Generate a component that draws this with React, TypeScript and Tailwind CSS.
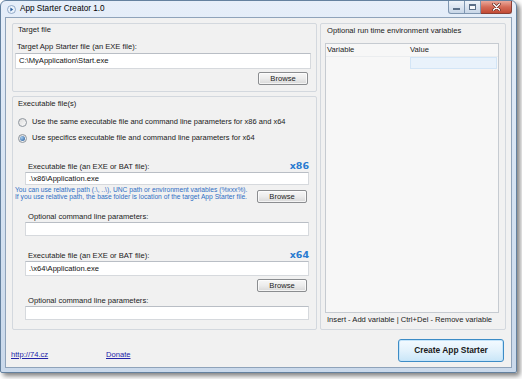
import React from 'react';

function TextBox({ value, className = '' }: { value?: string; className?: string }) {
  return (
    <div
      className={`bg-white border border-[#d6d9dd] border-t-[#b9bec5] flex items-center pl-[3px] text-[7.6px] text-[#111] ${className}`}
    >
      {value}
    </div>
  );
}

function Browse({ className = '' }: { className?: string }) {
  return (
    <div
      className={`w-[50px] h-[13px] rounded-[2px] border border-[#8b8d90] bg-linear-to-b from-[#f7f7f7] via-[#ececec] to-[#d8d8d8] shadow-[inset_0_0_0_1px_rgba(255,255,255,0.7)] flex items-center justify-center text-[7.6px] text-[#222] ${className}`}
    >
      Browse
    </div>
  );
}

function Radio({ checked }: { checked?: boolean }) {
  return (
    <div className="w-[9px] h-[9px] rounded-full border border-[#8e959d] bg-linear-to-br from-[#dcdcdc] to-[#fbfbfb] flex items-center justify-center">
      {checked && (
        <div className="w-[5px] h-[5px] rounded-full bg-[radial-gradient(circle_at_35%_35%,#a6cdf0,#1d5494)]" />
      )}
    </div>
  );
}

export default function App() {
  return (
    <div className="w-[522px] h-[379px] bg-white overflow-hidden font-['Liberation_Sans',Arial,sans-serif] text-[#1a1a1a]">
      {/* window frame */}
      <div className="w-[517px] h-[373px] flex flex-col rounded-t-[6px] rounded-b-[2px] border border-[#64819f] bg-linear-to-b from-[#e6eef9] via-[#d6e3f2] to-[#cad9eb] shadow-[3px_3px_5px_rgba(0,0,0,0.5)]">
        {/* title bar */}
        <div className="h-[16px] flex items-start">
          <svg className="ml-[6px] mt-[4px]" width="9" height="9" viewBox="0 0 9 9">
            <circle cx="4.5" cy="4.5" r="4" fill="#eaf2fb" stroke="#7d99bb" strokeWidth="0.8" />
            <path d="M3.4 2.6 L6.2 4.5 L3.4 6.4 Z" fill="#2d5f9c" />
          </svg>
          <div className="ml-[4px] h-[16px] pt-[1px] flex items-center text-[8.2px] text-black">App Starter Creator 1.0</div>
          <div className="ml-auto mr-[4px] flex">
            <div className="w-[17px] h-[13px] rounded-bl-[3px] border border-t-0 border-[#7f96b1] bg-linear-to-b from-[#eef3fa] to-[#c8d6e7] flex items-end justify-center pb-[3px]">
              <div className="w-[7px] h-[2px] bg-[#f7f9fc] border border-[#5b6f88]" />
            </div>
            <div className="w-[16px] h-[13px] border border-t-0 border-l-0 border-[#7f96b1] bg-linear-to-b from-[#eef3fa] to-[#c8d6e7] flex items-center justify-center">
              <div className="w-[7px] h-[6px] border border-t-2 border-[#5b6f88] bg-[#f7f9fc]" />
            </div>
            <div className="w-[31px] h-[13px] rounded-br-[3px] border border-t-0 border-l-0 border-[#8a3f35] bg-linear-to-b from-[#e9a99c] via-[#d46b57] to-[#c24a34] flex items-center justify-center">
              <svg width="9" height="8" viewBox="0 0 9 8">
                <path d="M1.5 1 L7.5 7 M7.5 1 L1.5 7" stroke="#5a2019" strokeWidth="2.6" strokeLinecap="round" />
                <path d="M1.5 1 L7.5 7 M7.5 1 L1.5 7" stroke="#ffffff" strokeWidth="1.5" strokeLinecap="round" />
              </svg>
            </div>
          </div>
        </div>

        {/* client area */}
        <div className="mx-[4px] mb-[4px] flex-1 flex flex-col border border-[#8fa3ba] bg-[#f1f1f1]">
          <div className="flex pt-[5px]">
            {/* left column */}
            <div className="ml-[6px] w-[305px] flex flex-col">
              {/* Target file */}
              <div className="border border-[#d3d8de] rounded-[2px] flex flex-col pb-[6px]">
                <div className="h-[12px] pl-[5px] flex items-center text-[7.6px]">Target file</div>
                <div className="mt-[5px] h-[12px] pl-[4px] flex items-center text-[7.6px]">Target App Starter file (an EXE file):</div>
                <TextBox className="ml-[2px] mr-[5px] h-[16px]" value={'C:\\MyApplication\\Start.exe'} />
                <Browse className="self-end mr-[8px] mt-[3px]" />
              </div>

              {/* Executable files */}
              <div className="mt-[4px] border border-[#d3d8de] rounded-[2px] flex flex-col pb-[9px]">
                <div className="mt-[1px] h-[12px] pl-[5px] flex items-center text-[7.6px]">Executable file(s)</div>
                <div className="mt-[6px] h-[12px] pl-[5px] flex items-center gap-[5px] text-[7.5px]">
                  <Radio />
                  <span>Use the same executable file and command line parameters for x86 and x64</span>
                </div>
                <div className="mt-[4px] h-[12px] pl-[5px] flex items-center gap-[5px] text-[7.5px]">
                  <Radio checked />
                  <span>Use specifics executable file and command line parameters for x64</span>
                </div>

                <div className="mt-[17px] h-[11px] ml-[15px] mr-[7px] flex items-center justify-between">
                  <span className="text-[7.6px]">Executable file (an EXE or BAT file):</span>
                  <span className="font-['DejaVu_Sans',sans-serif] font-bold text-[9.5px] text-[#2a7bd0]">x86</span>
                </div>
                <TextBox className="ml-[12px] mr-[7px] h-[13px]" value={'.\\x86\\Application.exe'} />
                <div className="h-[18px] ml-[2px] mr-[9px] flex items-start">
                  <div className="pt-[1px] text-[6.7px] leading-[7px] text-[#2f6fc4]">
                    <div>You can use relative path (.\, ..\), UNC path or environment variables (%xxx%).</div>
                    <div>If you use relative path, the base folder is location of the target App Starter file.</div>
                  </div>
                  <Browse className="ml-auto mt-[5px]" />
                </div>
                <div className="mt-[8px] h-[11px] ml-[15px] flex items-center text-[7.6px]">Optional command line parameters:</div>
                <TextBox className="ml-[12px] mr-[7px] h-[14px]" />

                <div className="mt-[14px] h-[11px] ml-[15px] mr-[7px] flex items-center justify-between">
                  <span className="text-[7.6px]">Executable file (an EXE or BAT file):</span>
                  <span className="font-['DejaVu_Sans',sans-serif] font-bold text-[9.5px] text-[#2a7bd0]">x64</span>
                </div>
                <TextBox
                  className="ml-[12px] mr-[7px] h-[15px] border-[#a9c8e8] border-t-[#5f9bd6]"
                  value={'.\\x64\\Application.exe'}
                />
                <Browse className="self-end mr-[9px] mt-[3px]" />
                <div className="mt-[3px] h-[11px] ml-[15px] flex items-center text-[7.6px]">Optional command line parameters:</div>
                <TextBox className="ml-[12px] mr-[7px] h-[14px]" />
              </div>
            </div>

            {/* environment variables */}
            <div className="ml-[3px] w-[186px] border border-[#d3d8de] rounded-[2px] flex flex-col pb-[4px]">
              <div className="mt-[1px] h-[12px] pl-[6px] flex items-center text-[7.6px]">Optional run time environment variables</div>
              <div className="mt-[6px] ml-[4px] w-[174px] flex-1 border border-[#c6cbd1] bg-[#f7f7f7] flex flex-col">
                <div className="h-[13px] flex items-center text-[7.6px] border-b border-[#ebedef]">
                  <span className="w-[84px] pl-[1px]">Variable</span>
                  <span>Value</span>
                </div>
                <div className="ml-[84px] w-[87px] h-[12px] bg-[#e9f2fb] border border-[#d3e5f6]" />
              </div>
              <div className="mt-[1px] h-[11px] pl-[6px] flex items-center text-[7.6px]">
                Insert - Add variable | Ctrl+Del - Remove variable
              </div>
            </div>
          </div>

          {/* bottom row */}
          <div className="flex-1 flex items-end pb-[5px] pl-[5px] pr-[7px]">
            <div className="mb-[2px] h-[11px] flex items-center text-[7.6px] text-[#2222a8] underline">
              <span className="w-[95px]">http://74.cz</span>
              <span>Donate</span>
            </div>
            <div className="ml-auto w-[106px] h-[23px] rounded-[3px] border border-[#3d8cc6] bg-linear-to-b from-[#f3faff] via-[#e3f2fc] to-[#c9e6f8] shadow-[inset_0_0_0_1px_#c4e4fa] flex items-center justify-center text-[8.4px] font-bold text-[#1a1a1a]">
              Create App Starter
            </div>
          </div>
        </div>
      </div>
    </div>
  );
}
